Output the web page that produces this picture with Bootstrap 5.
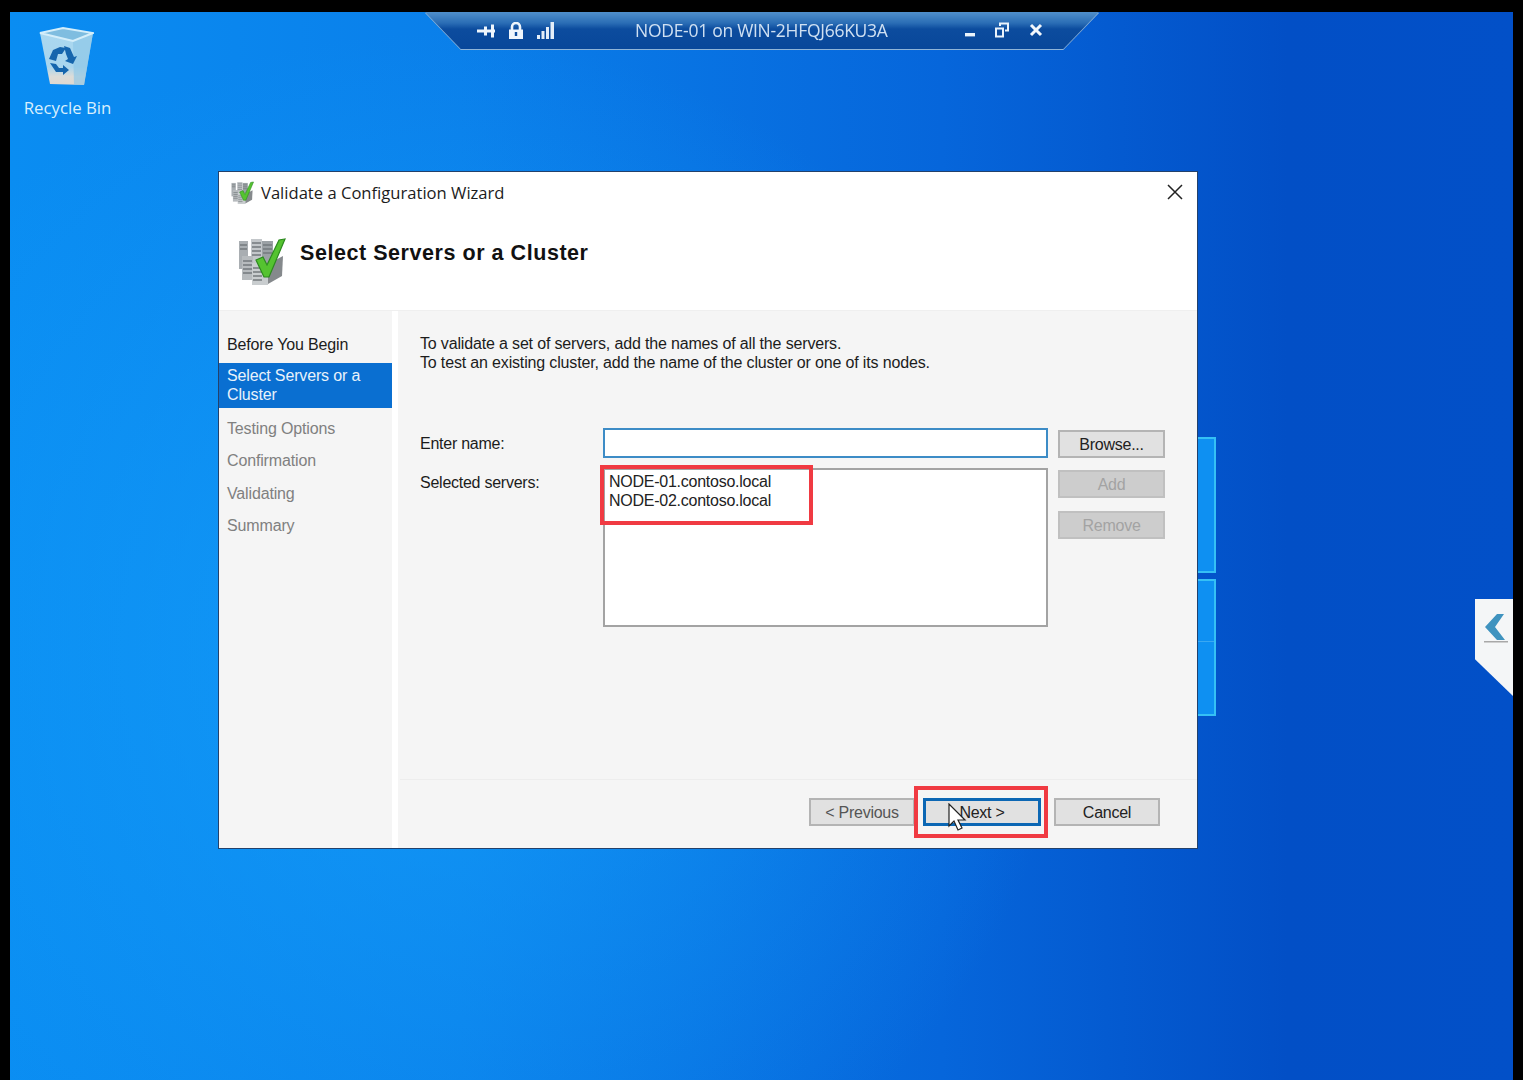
<!DOCTYPE html>
<html lang="en">
<head>
  <meta charset="UTF-8">
  <title>Validate a Configuration Wizard</title>
  <meta name="viewport" content="width=device-width, initial-scale=1">
  <link href="https://cdn.jsdelivr.net/npm/bootstrap@5.3.0/dist/css/bootstrap.min.css" rel="stylesheet">
  <style>
    html, body { height: 100%; margin: 0; background: #000; overflow: hidden; }
    body { font-family: "Open Sans", "Liberation Sans", sans-serif; }

    .screen { position: relative; width: 1523px; height: 1080px; background: #000; padding: 12px 10px 0 10px; }
    .desk {
      position: relative; height: 100%; overflow: hidden;
      background:
        radial-gradient(ellipse 640px 620px at 420px 640px, rgba(20,160,250,.75), rgba(20,160,250,0) 100%),
        linear-gradient(90deg, #0a8df2 0%, #0a7fea 30%, #0666db 62%, #024fc6 85%, #0250c8 100%);
    }

    /* desktop icon */
    .bin { position: absolute; left: 0; top: 12px; width: 115px; color: #d8effd; font-size: 16.8px; text-align: center; line-height: 22px; }
    .bin svg { display: block; margin: 0 0 9px 28px; }

    /* win logo panes behind the dialog */
    .pane { position: absolute; border: 2px solid #35c0f5; border-left: 0; background: #0e90f2; }
    .pane-a { left: 1170px; top: 425px; width: 36px; height: 136px; }
    .pane-b { left: 1170px; top: 567px; width: 36px; height: 137px; }
    .pane-b::after { content: ""; display: block; height: 1px; margin-top: 60px; background: #3aa8f2; }

    /* rdp connection bar */
    .rdpbar { position: absolute; left: 415px; top: 0; width: 674px; height: 38px; filter: drop-shadow(0 1px 0 #8fb4d8); }
    .rdpshape {
      height: 37px; color: #cfe0f2;
      clip-path: polygon(0 0, 100% 0, 94.7% 100%, 5.3% 100%);
      background: linear-gradient(180deg, #4f8fcb 0%, #2a6db5 30%, #0c4c9e 46%, #08479a 100%);
    }
    .rdp-icons { width: 210px; padding-left: 52px; gap: 13px; flex: none; }
    .rdp-name { font-size: 17.5px; width: 330px; flex: none; letter-spacing: -.28px; white-space: nowrap; }
    .rdp-ctl { gap: 20px; padding-bottom: 2px; }

    /* wizard window */
    .wiz { position: absolute; left: 208px; top: 159px; width: 980px; height: 678px; background: #fff; border: 1px solid #23416b; color: #1c1c1c; }
    .wiz-title { height: 42px; padding: 9px 0 0 12px; font-size: 16.6px; }
    .wiz-title span { margin-left: 7px; }
    .wiz-close { margin-left: auto; margin-right: 14px; margin-top: 3px; }
    .wiz-head { height: 96px; padding: 24px 0 0 19px; }
    .wiz-head h1 { font-family: "Liberation Sans", Arial, sans-serif; font-weight: 700; font-size: 21.5px; letter-spacing: .55px; margin: 0 0 0 14px; padding-top: 3px; color: #111; }
    .wiz-body { height: 538px; background: #f5f5f5; border-top: 1px solid #efefef; font-family: "Liberation Sans", Arial, sans-serif; font-size: 16px; letter-spacing: -.25px; }
    .steps { width: 173px; padding-top: 24px; flex: none; letter-spacing: -.15px; }
    .step { padding: 0 8px; line-height: 19px; margin-bottom: 13.4px; color: #808080; }
    .step-done { color: #1c1c1c; margin-bottom: 9px; }
    .step-on { background: #0a6fd1; color: #e8f2fb; padding: 3px 8px 4px; margin-bottom: 11px; }
    .divider { width: 6px; background: #fff; flex: none; }
    .intro { padding: 23px 0 0 22px; line-height: 19px; height: 116px; letter-spacing: -.16px; }
    .form-area { padding: 1px 0 0 22px; height: 352px; }
    .lbl { width: 183px; flex: none; }
    .name-box { width: 445px; height: 30px; background: #fff; border: 2px solid #3d8cc6; flex: none; }
    .list-box { width: 445px; height: 159px; background: #fff; border: 2px solid #a3a3a3; padding: 2px 4px; line-height: 19px; flex: none; color: #222; }
    .row-name { height: 40px; }
    .lbl-name { padding-top: 4px; }
    .lbl-list { padding-top: 3px; }
    .side-btns { margin-left: 10px; width: 107px; flex: none; padding-top: 2px; gap: 13px; }
    .btnw { display: block; width: 107px; height: 28px; background: #e1e1e1; border: 2px solid #b4b4b4; color: #222; line-height: 26px; text-align: center; border-radius: 0; padding: 0; font-size: 16px; letter-spacing: -.25px; }
    .btnw-off { background: #cdcdcd; border-color: #c0c0c0; color: #a3a3a3; }
    .btn-browse { margin: 2px 0 0 10px; flex: none; }
    .foot { height: 70px; border-top: 1px solid #ededed; margin-left: 2px; padding: 18px 0 0 409px; }
    .foot .btnw { width: 106px; }
    .btn-prev { color: #555; }
    .btn-next { margin-left: 8px; width: 118px !important; border-color: #0c67b4 !important; border-width: 3px !important; line-height: 24px !important; }
    .btn-cancel { margin-left: 13px; }

    /* callouts on top of the dialog */
    .callout { position: absolute; border: 4px solid #f03a42; }
    .call-list { left: 590px; top: 453px; width: 213px; height: 60px; }
    .call-next { left: 904px; top: 774px; width: 134px; height: 52px; }
    .pointer { position: absolute; left: 937px; top: 791px; }

    /* side tab */
    .sidetab { position: absolute; right: 0; top: 587px; width: 38px; height: 97px; background: #f4f6f7; clip-path: polygon(0 0, 100% 0, 100% 100%, 0 62%); }
    .sidetab svg { margin: 14px 0 0 9px; display: block; }
  </style>
</head>
<body>
  <svg width="0" height="0" class="d-block position-absolute">
    <symbol id="cluster" viewBox="0 0 48 48">
      <g fill="#a9aeb2">
        <rect x="1" y="3" width="9" height="28"/>
        <rect x="24" y="3" width="11" height="22" fill="#9ba1a5"/>
      </g>
      <rect x="13" y="1" width="11" height="24" fill="#c3c7ca"/>
      <rect x="4" y="18" width="11" height="24" fill="#b7bbbe"/>
      <rect x="14" y="25" width="16" height="22" fill="#c9cdcf"/>
      <path d="M30 26 L45 18 L44 38 L30 46 Z" fill="#85898c"/>
      <g stroke="#74797d" stroke-width="1.4">
        <path d="M2 7h7M2 11h7M14 5h9M14 9h9M14 13h9M14 17h9M25 7h9M25 11h9M25 15h9M5 23h9M5 27h9M5 31h9M5 35h9M15 30h9M15 34h9M15 38h9M15 42h9"/>
      </g>
      <path d="M18 22 L25 19 L29 27 L41 2 L47 1 L31 39 L26 39 Z" fill="#55c330" stroke="#2c8a1f" stroke-width="1.2"/>
    </symbol>
  </svg>
  <div class="screen">
    <div class="desk">

      <div class="pane pane-a"></div>
      <div class="pane pane-b"></div>

      <div class="bin">
        <svg width="56" height="64" viewBox="0 0 56 64">
          <defs>
            <linearGradient id="binbody" x1="0" y1="0" x2="0" y2="1">
              <stop offset="0" stop-color="#aad8f0"/><stop offset=".68" stop-color="#a8d5ee"/><stop offset=".85" stop-color="#dcdcd8"/><stop offset="1" stop-color="#e0d8d0"/>
            </linearGradient>
          </defs>
          <path d="M2 9 L25 4 L55 9 L46 61 L12 60 Z" fill="url(#binbody)"/>
          <path d="M35 17 L55 9 L46 61 L36 61 Z" fill="#8cc6e6" opacity=".65"/>
          <path d="M2 9 L25 4 L55 9 L35 17 Z" fill="#7fbde0" stroke="#d4eefa" stroke-width="2"/>
          <g fill="#1565ad">
            <path d="M11 35 L15 26 L22 23 L28 24 L24 30 L20 30 L18 37 Z"/>
            <path d="M26 22 L32 24 L36 33 L39 32 L35 40 L27 37 L30 35 L28 30 Z"/>
            <path d="M12 39 L18 40 L21 44 L25 44 L25 41 L31 46 L25 51 L25 48 L18 48 Z"/>
          </g>
        </svg>
        <div>Recycle Bin</div>
      </div>

      <div class="rdpbar">
        <div class="rdpshape d-flex align-items-center">
          <div class="rdp-icons d-flex align-items-center">
            <svg width="18" height="14" viewBox="0 0 18 14" fill="#eef5fc"><rect x="0" y="5.5" width="18" height="3"/><rect x="7" y="2.5" width="3" height="9"/><rect x="14" y="0.5" width="3" height="13"/></svg>
            <svg width="16" height="18" viewBox="0 0 16 18" fill="#eef5fc"><path d="M1 7.5h14V17H1z"/><path d="M4 8V5a4 4 0 0 1 8 0v3" fill="none" stroke="#eef5fc" stroke-width="2.6"/><rect x="6.8" y="10" width="2.4" height="4" fill="#0c4c9e"/></svg>
            <svg width="18" height="18" viewBox="0 0 18 18" fill="#e4eef8"><rect x="0" y="13" width="3" height="4"/><rect x="4.5" y="9" width="3" height="8"/><rect x="9" y="5" width="3" height="12"/><rect x="13.5" y="0" width="3.5" height="17"/></svg>
          </div>
          <div class="rdp-name">NODE-01 on WIN-2HFQJ66KU3A</div>
          <div class="rdp-ctl d-flex align-items-center">
            <svg width="10" height="14" viewBox="0 0 10 14" fill="#eaf3fb"><rect y="10" width="10" height="3.4"/></svg>
            <svg width="14" height="16" viewBox="0 0 14 16" fill="none" stroke="#eaf3fb" stroke-width="2"><rect x="1" y="6.5" width="7" height="8"/><path d="M5 4V1.5h8v7H10"/></svg>
            <svg width="14" height="14" viewBox="0 0 14 14" fill="none" stroke="#f2f7fc" stroke-width="3"><path d="M2 2l10 10M12 2L2 12"/></svg>
          </div>
        </div>
      </div>

      <div class="wiz d-flex flex-column">
        <div class="wiz-title d-flex align-items-start">
          <svg width="23" height="24"><use href="#cluster"/></svg>
          <span>Validate a Configuration Wizard</span>
          <svg class="wiz-close" width="16" height="16" viewBox="0 0 16 16" stroke="#222" stroke-width="1.5"><path d="M1 1l14 14M15 1L1 15"/></svg>
        </div>
        <div class="wiz-head d-flex align-items-start">
          <svg width="48" height="48"><use href="#cluster"/></svg>
          <h1>Select Servers or a Cluster</h1>
        </div>
        <div class="wiz-body d-flex">
          <div class="steps">
            <div class="step step-done">Before You Begin</div>
            <div class="step step-on">Select Servers or a Cluster</div>
            <div class="step">Testing Options</div>
            <div class="step">Confirmation</div>
            <div class="step">Validating</div>
            <div class="step">Summary</div>
          </div>
          <div class="divider"></div>
          <div class="flex-grow-1">
            <div class="intro">
              To validate a set of servers, add the names of all the servers.<br>
              To test an existing cluster, add the name of the cluster or one of its nodes.
            </div>
            <div class="form-area">
              <div class="row-name d-flex">
                <div class="lbl lbl-name">Enter name:</div>
                <div class="name-box"></div>
                <button type="button" class="btnw btn-browse">Browse...</button>
              </div>
              <div class="d-flex">
                <div class="lbl lbl-list">Selected servers:</div>
                <div class="list-box">NODE-01.contoso.local<br>NODE-02.contoso.local</div>
                <div class="side-btns d-flex flex-column">
                  <button type="button" class="btnw btnw-off">Add</button>
                  <button type="button" class="btnw btnw-off">Remove</button>
                </div>
              </div>
            </div>
            <div class="foot d-flex">
              <button type="button" class="btnw btn-prev">&lt; Previous</button>
              <button type="button" class="btnw btn-next">Next &gt;</button>
              <button type="button" class="btnw btn-cancel">Cancel</button>
            </div>
          </div>
        </div>
      </div>

      <div class="callout call-list"></div>
      <div class="callout call-next"></div>
      <svg class="pointer" width="20" height="30" viewBox="0 0 20 30">
        <path d="M2 1 L2 23 L7 18 L11 27 L15 25 L11 17 L18 17 Z" fill="#fff" stroke="#222" stroke-width="1.2"/>
      </svg>

      <div class="sidetab">
        <svg width="24" height="32" viewBox="0 0 24 32">
          <path d="M20 1 L13 1 L1 14 L13 27 L21 27 L11 14 Z" fill="#3f93bf"/>
          <rect x="0" y="28" width="24" height="1.5" fill="#a8a8a8"/>
        </svg>
      </div>

    </div>
  </div>
  <script src="https://cdn.jsdelivr.net/npm/bootstrap@5.3.0/dist/js/bootstrap.bundle.min.js"></script>
</body>
</html>
